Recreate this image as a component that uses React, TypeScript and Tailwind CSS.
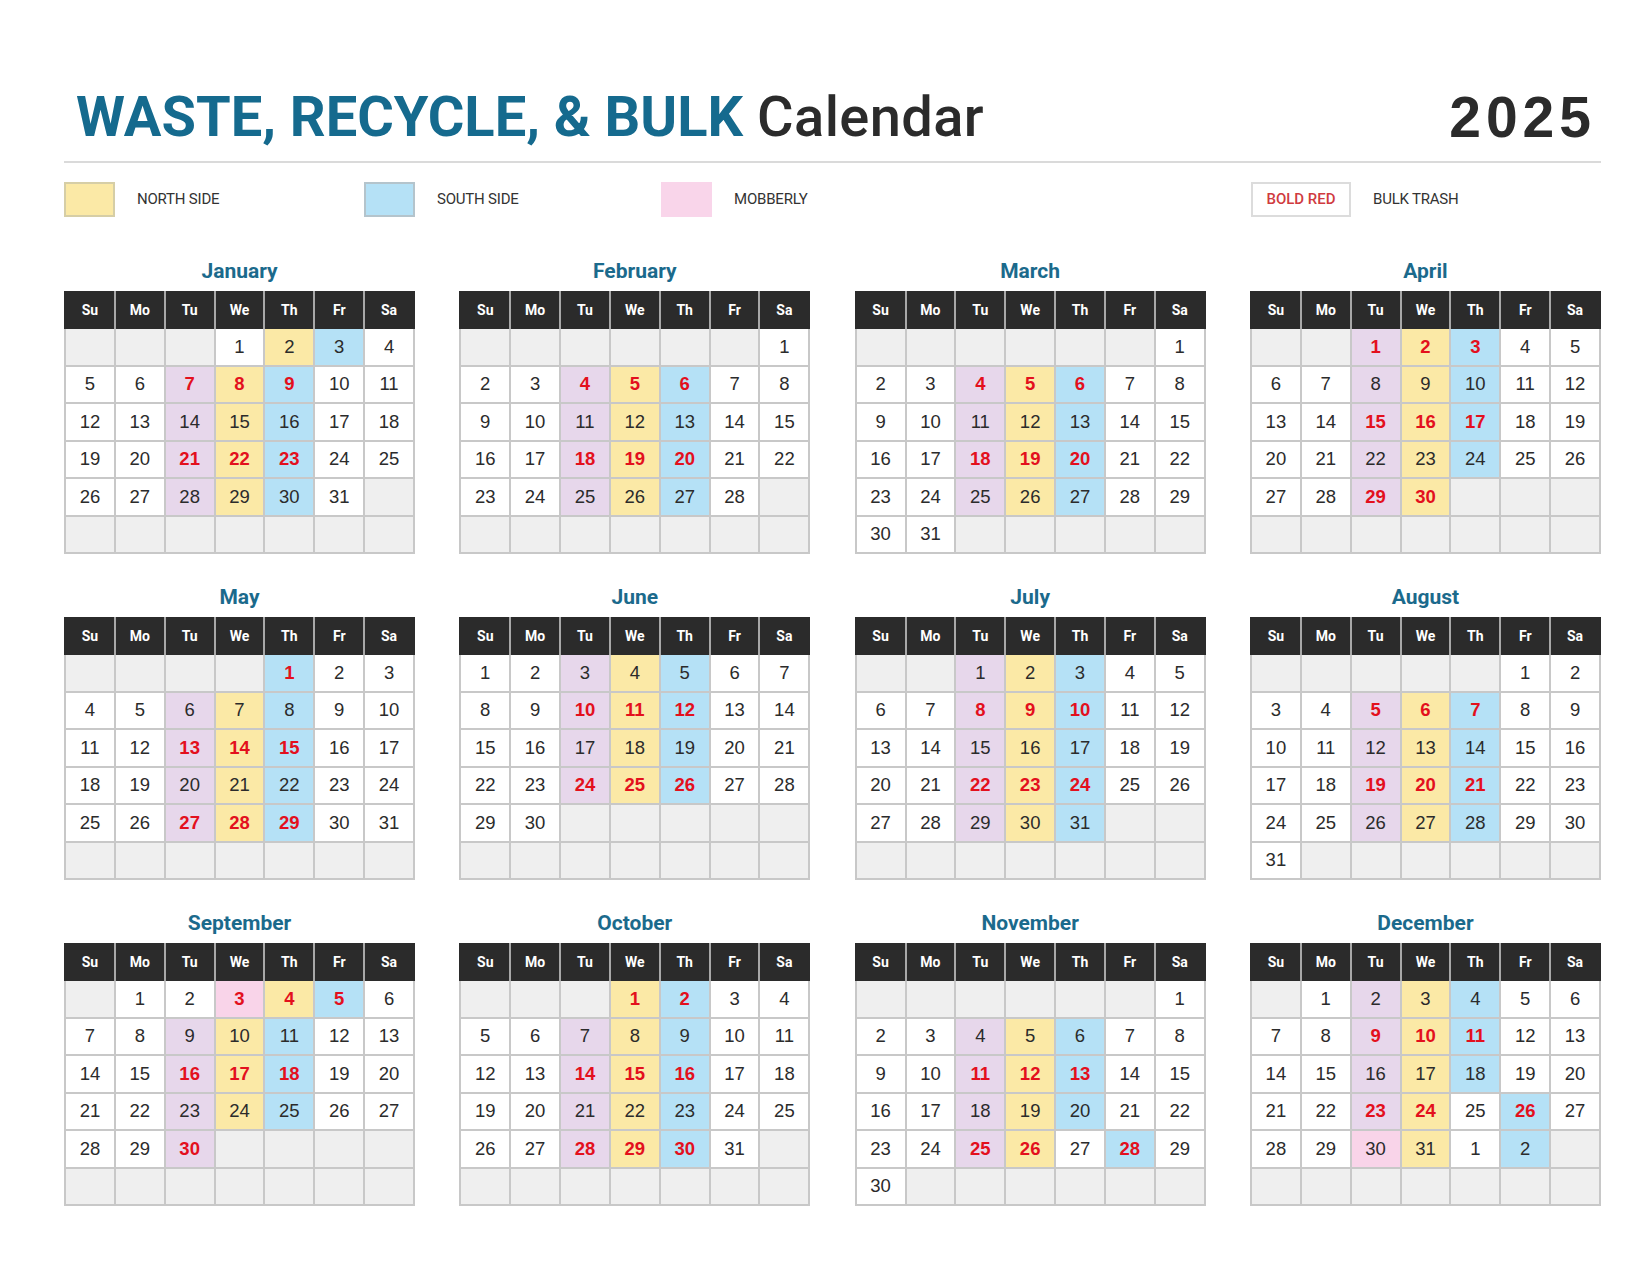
import React from "react";

type Cell = { label: string; bg: string; red: boolean };

const MONTHS = [
  "January",
  "February",
  "March",
  "April",
  "May",
  "June",
  "July",
  "August",
  "September",
  "October",
  "November",
  "December",
];

const DAYS = ["Su", "Mo", "Tu", "We", "Th", "Fr", "Sa"];

// number + code: l lavender, y yellow, b blue, p pink; uppercase = bulk trash (bold red)
const MARKS = [
  "2y 3b 7L 8Y 9B 14l 15y 16b 21L 22Y 23B 28l 29y 30b",
  "4L 5Y 6B 11l 12y 13b 18L 19Y 20B 25l 26y 27b",
  "4L 5Y 6B 11l 12y 13b 18L 19Y 20B 25l 26y 27b",
  "1L 2Y 3B 8l 9y 10b 15L 16Y 17B 22l 23y 24b 29L 30Y",
  "1B 6l 7y 8b 13L 14Y 15B 20l 21y 22b 27L 28Y 29B",
  "3l 4y 5b 10L 11Y 12B 17l 18y 19b 24L 25Y 26B",
  "1l 2y 3b 8L 9Y 10B 15l 16y 17b 22L 23Y 24B 29l 30y 31b",
  "5L 6Y 7B 12l 13y 14b 19L 20Y 21B 26l 27y 28b",
  "3P 4Y 5B 9l 10y 11b 16L 17Y 18B 23l 24y 25b 30L",
  "1Y 2B 7l 8y 9b 14L 15Y 16B 21l 22y 23b 28L 29Y 30B",
  "4l 5y 6b 11L 12Y 13B 18l 19y 20b 25L 26Y 28B",
  "2l 3y 4b 9L 10Y 11B 16l 17y 18b 23L 24Y 26B 30p 31y",
];

const BG: Record<string, string> = {
  l: "bg-[#e7d7eb]",
  y: "bg-[#fbe9a6]",
  b: "bg-[#b5e1f6]",
  p: "bg-[#f9d4e9]",
};

// trailing days of the next year shown in December
const EXTRA: Record<number, { label: string; code: string }[]> = {
  11: [
    { label: "1", code: "" },
    { label: "2", code: "b" },
  ],
};

function buildCells(m: number): Cell[] {
  const start = new Date(2025, m, 1).getDay();
  const count = new Date(2025, m + 1, 0).getDate();
  const marks: Record<number, string> = {};
  MARKS[m].split(" ").forEach((t) => {
    marks[parseInt(t)] = t.slice(-1);
  });
  const cells: Cell[] = [];
  for (let i = 0; i < start; i++) cells.push({ label: "", bg: "bg-[#efefef]", red: false });
  for (let d = 1; d <= count; d++) {
    const code = marks[d];
    cells.push({
      label: String(d),
      bg: code ? BG[code.toLowerCase()] : "bg-white",
      red: !!code && code !== code.toLowerCase(),
    });
  }
  (EXTRA[m] || []).forEach((e) =>
    cells.push({ label: e.label, bg: e.code ? BG[e.code] : "bg-white", red: false })
  );
  while (cells.length < 42) cells.push({ label: "", bg: "bg-[#efefef]", red: false });
  return cells;
}

function MonthCard({ m }: { m: number }) {
  const cells = buildCells(m);
  return (
    <div className="w-[351px]">
      <h2 className="h-[28px] leading-[28px] mb-[6px] text-center text-[21px] font-bold text-[#1b6a8c] font-['Roboto',sans-serif]">
        {MONTHS[m]}
      </h2>
      <div className="bg-[#2b2b2b] px-[2px]">
        <div className="grid grid-cols-7 gap-x-[2px] bg-[#a8a8a8]">
          {DAYS.map((d) => (
            <div
              key={d}
              className="h-[38px] flex items-center justify-center bg-[#2b2b2b] text-white text-[14px] font-bold font-['Roboto',sans-serif]"
            >
              {d}
            </div>
          ))}
        </div>
      </div>
      <div className="bg-[#c8c8c8] px-[2px] pb-[2px]">
        <div className="grid grid-cols-7 gap-[2px]">
          {cells.map((c, i) => (
            <div
              key={i}
              className={`h-[35.5px] flex items-center justify-center text-[18.5px] font-['Liberation_Sans',Arial,sans-serif] ${c.bg} ${
                c.red ? "font-bold text-[#e3101d]" : "text-[#2b2b2b]"
              }`}
            >
              {c.label}
            </div>
          ))}
        </div>
      </div>
    </div>
  );
}

function Swatch({ color, label, width }: { color: string; label: string; width: string }) {
  return (
    <div className={`flex items-center ${width}`}>
      <div className={`w-[51px] h-[35px] ${color}`} />
      <span className="ml-[22px] text-[15px] text-[#333] font-['Roboto',sans-serif] tracking-[-0.2px]">{label}</span>
    </div>
  );
}

export default function App() {
  return (
    <div className="min-h-[1275px] bg-white pl-[64px] pr-[49px] pt-[90px] font-['Roboto',sans-serif]">
      {/* Title */}
      <div className="flex items-start justify-between">
        <h1 className="pl-[12px] text-[56px] leading-[55px] font-bold text-[#156a8e]">
          WASTE, RECYCLE, &amp; BULK{" "}
          <span className="font-medium text-[#2b2b2b] tracking-[0.4px]">Calendar</span>
        </h1>
        <div className="pr-[5px] text-[57px] leading-[55px] font-bold text-[#2b2b2b] tracking-[5px] font-['Liberation_Sans',Arial,sans-serif]">
          2025
        </div>
      </div>
      <div className="mt-[16px] h-[2px] bg-[#dadada]" />

      {/* Legend */}
      <div className="mt-[19px] flex items-center">
        <Swatch color="bg-[#fbe9a6] border-2 border-[#d6cea6]" label="NORTH SIDE" width="w-[300px]" />
        <Swatch color="bg-[#b5e1f6] border-2 border-[#b4c4cc]" label="SOUTH SIDE" width="w-[297px]" />
        <Swatch color="bg-[#f9d5ea]" label="MOBBERLY" width="w-[590px]" />
        <div className="flex items-center">
          <div className="w-[100px] h-[35px] border-2 border-[#dcdcdc] flex items-center justify-center text-[15px] font-medium text-[#d03b3f]">
            BOLD RED
          </div>
          <span className="ml-[22px] text-[15px] text-[#333] tracking-[-0.2px]">BULK TRASH</span>
        </div>
      </div>

      {/* Months */}
      <div className="mt-[40px] grid grid-cols-[repeat(4,351px)] justify-between gap-y-[29px] pb-[70px]">
        {MONTHS.map((_, m) => (
          <MonthCard key={m} m={m} />
        ))}
      </div>
    </div>
  );
}
